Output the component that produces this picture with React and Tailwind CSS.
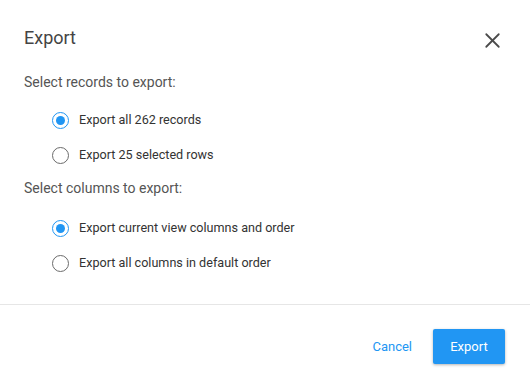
import { X } from 'lucide-react'

function Radio({ checked, label }) {
  return (
    <label className="flex items-center gap-[10px] h-[20px]">
      <span
        className={`w-[17px] h-[17px] rounded-full border-[1.5px] flex items-center justify-center ${
          checked ? 'border-[#2196f3]' : 'border-[#6b6b6b]'
        }`}
      >
        {checked && <span className="w-[9px] h-[9px] rounded-full bg-[#2196f3]" />}
      </span>
      <span className="text-[12.6px] text-[#333]">{label}</span>
    </label>
  )
}

export default function App() {
  return (
    <div className="w-[530px] h-[381px] bg-white font-['Roboto',sans-serif] flex flex-col">
      <div className="flex items-center justify-between pl-6 pr-[25px] pt-[22px] h-[58px]">
        <h1 className="text-[18px] text-[#444] leading-5 -mt-[4px]">Export</h1>
        <X size={25} strokeWidth={1.7} className="text-[#4a4a4a] mt-[1px]" />
      </div>

      <div className="px-6 pt-[16px]">
        <p className="text-[14px] text-[#555] leading-4">Select records to export:</p>
        <div className="pl-[28px] pt-[20px] flex flex-col gap-[15px]">
          <Radio checked label="Export all 262 records" />
          <Radio label="Export 25 selected rows" />
        </div>

        <p className="text-[14px] text-[#555] leading-4 pt-[15px]">Select columns to export:</p>
        <div className="pl-[28px] pt-[22px] flex flex-col gap-[15px]">
          <Radio checked label="Export current view columns and order" />
          <Radio label="Export all columns in default order" />
        </div>
      </div>

      <div className="mt-[31px] border-t border-[#e6e6e6]" />

      <div className="flex justify-end items-center gap-[21px] pr-[25px] pt-[24px]">
        <button className="text-[13px] text-[#2196f3]">Cancel</button>
        <button className="w-[72px] h-[35px] bg-[#2196f3] text-white text-[13px] rounded-[2px] shadow-[0_1px_3px_rgba(0,0,0,0.3)]">
          Export
        </button>
      </div>
    </div>
  )
}
